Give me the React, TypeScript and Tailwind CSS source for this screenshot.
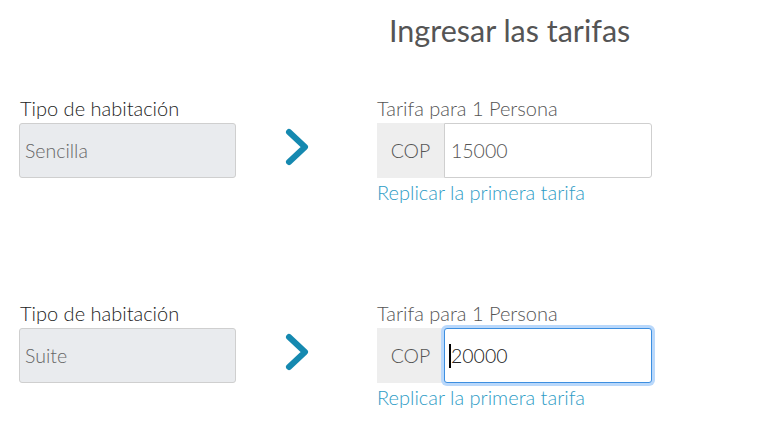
import React from "react";

function Chevron() {
  return (
    <svg width="30" height="42" viewBox="0 0 30 42" className="block">
      <path d="M7 6 L23 21 L7 36" fill="none" stroke="#1589b0" strokeWidth="6" strokeLinecap="round" strokeLinejoin="round" />
    </svg>
  );
}

function Row({ tipo, value, focused }: { tipo: string; value: string; focused?: boolean }) {
  return (
    <div className="flex">
      <div className="w-[217px] flex flex-col">
        <div className="text-[20px] leading-[20px] font-light text-[#222] pl-px">Tipo de habitación</div>
        <div className="mt-[5px] h-[55px] rounded-[3px] border border-[#cfcfcf] bg-[#e9ebee] flex items-center px-[5px] text-[19.5px] font-light text-[#666]">
          {tipo}
        </div>
      </div>
      <div className="w-[141px] pl-[46px] pt-[28px]">
        <Chevron />
      </div>
      <div className="flex flex-col w-[275px]">
        <div className="text-[20px] leading-[20px] font-light text-[#555]">Tarifa para 1 Persona</div>
        <div className="mt-[5px] flex h-[55px]">
          <div className="w-[67px] bg-[#eeeeee] flex items-center justify-center text-[19.5px] font-light text-[#555]">COP</div>
          {focused ? (
            <div className="flex-1 rounded-[3px] border border-[#3d8fe0] shadow-[0_0_0_3px_#b9d8fb] bg-white flex items-center pl-[4px] text-[19.5px] font-light text-[#222]">
              <span className="inline-block w-[2px] h-[24px] bg-black"></span>
              <span>{value}</span>
            </div>
          ) : (
            <div className="flex-1 rounded-r-[3px] border border-[#cfcfcf] bg-white flex items-center pl-[6px] text-[19.5px] font-light text-[#555]">
              {value}
            </div>
          )}
        </div>
        <div className="mt-px text-[20px] leading-[26px] font-light text-[#2e9cc6]">Replicar la primera tarifa</div>
      </div>
    </div>
  );
}

export default function App() {
  return (
    <div className="w-[783px] h-[426px] bg-white overflow-hidden" style={{ fontFamily: "Lato, 'Open Sans', sans-serif" }}>
      <div className="pl-[389px] pt-[12px] text-[30.5px] leading-[36px] text-[#555]">Ingresar las tarifas</div>
      <div className="pl-[19px] pt-[50px] flex flex-col gap-[98px]">
        <Row tipo="Sencilla" value="15000" />
        <Row tipo="Suite" value="20000" focused />
      </div>
    </div>
  );
}
